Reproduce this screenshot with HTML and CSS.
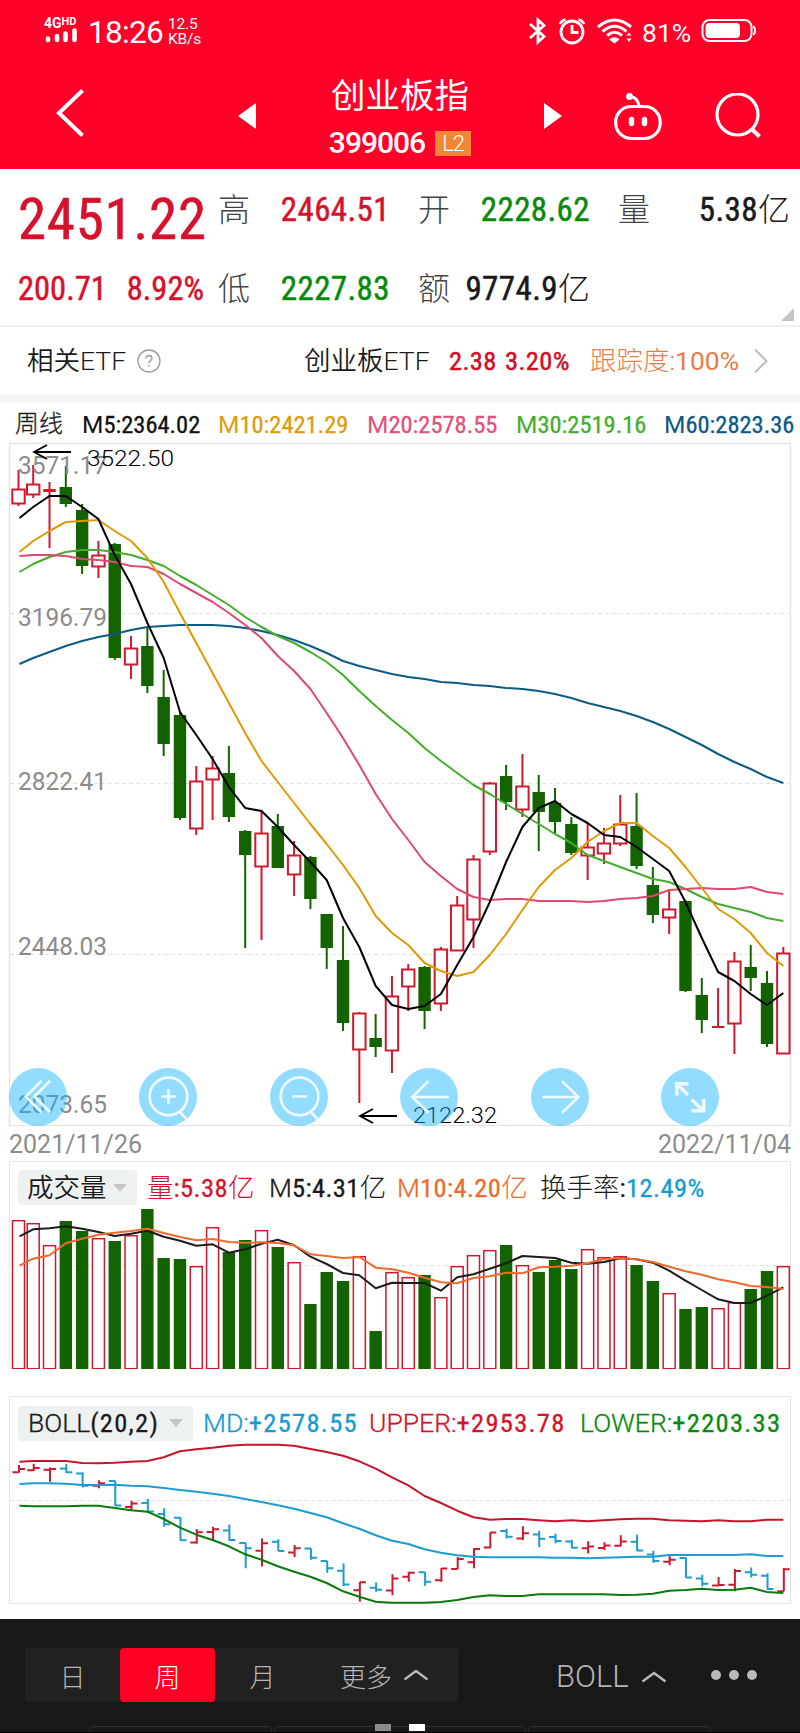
FILE: index.html
```html
<!DOCTYPE html>
<html lang="zh-CN">
<head>
    <meta charset="UTF-8">
    <meta name="viewport" content="width=device-width, initial-scale=1.0">
    <title>创业板指 399006</title>
    <link rel="stylesheet" href="styles.css">
</head>
<body>
    <header class="header">
        <div class="status">
            <div class="signal">
                <div class="net">4G<span class="hd">HD</span></div>
                <svg width="33" height="16" viewBox="0 0 33 16" stroke="#fff" stroke-width="4.6" stroke-linecap="round"><path d="M4 10.5V12M13 8V12M21.500 5.500V12M30.500 2.500V12"/></svg>
            </div>
            <div class="clock">18:26</div>
            <div class="speed">12.5<br>KB/s</div>
            <svg class="status-icons" width="106" height="32" viewBox="0 0 106 32" fill="none" stroke="#fff" stroke-width="2.800">
                <path d="M2 9L16 21.500L10 27V5L16 10.500L2 23"/>
                <circle cx="44" cy="17" r="11"/>
                <path d="M44 10V17.500H50.500M32 9Q33.500 5.500 37.500 4.500M56 9Q54.500 5.500 50.500 4.500"/>
                <path d="M70 12Q86.500 -2 103 12M74.500 16.500Q86.500 6 98.500 16.500M79 20.500Q86.500 14 94 20.500" stroke-width="3"/>
                <path d="M81 24.500Q86.500 20 91.500 24.500L86.500 28.500Z" fill="#fff" stroke="none"/>
                <path d="M98.500 20.500L101 17.500L103.500 20.500ZM98.500 23.500L101 27L103.500 23.500Z" fill="#fff" stroke="none"/>
            </svg>
            <div class="percent">81%</div>
            <svg width="56" height="26" viewBox="0 0 56 26" fill="none" stroke="#fff" stroke-width="2"><rect x="2.500" y="2" width="49" height="21" rx="7"/><rect x="5.500" y="5" width="34.500" height="15" rx="4" fill="#fff" stroke="none"/><path d="M53 8.500Q55 9 55 12.500Q55 16 53 16.500"/></svg>
        </div>
        <nav class="nav">
            <svg class="back" width="30" height="50" viewBox="0 0 30 50" fill="none" stroke="#fff" stroke-width="4"><path d="M26.500 2.500L3 25L26.500 47.500"/></svg>
            <svg class="prev" width="18" height="28" viewBox="0 0 18 28"><path d="M18 0V26L0 13Z" fill="#fff"/></svg>
            <div class="title">
                <h1>创业板指</h1>
                <p class="code">399006<span class="level">L2</span></p>
            </div>
            <svg class="next" width="18" height="28" viewBox="0 0 18 28"><path d="M0 0V26L18 13Z" fill="#fff"/></svg>
            <svg class="robot" width="48" height="48" viewBox="0 0 48 48" fill="none" stroke="#fff" stroke-width="3.200"><rect x="1.700" y="13.500" width="44.500" height="32" rx="15.500"/><path d="M16 3.500Q23.500 4 25 13"/><circle cx="15.500" cy="3.500" r="3.400" fill="#fff" stroke="none"/><path d="M17.500 26.500V30.500M30.500 26.500V30.500" stroke-width="5.400" stroke-linecap="round"/></svg>
            <svg class="search" width="46" height="46" viewBox="0 0 46 46" fill="none" stroke="#fff" stroke-width="3.200"><circle cx="22.500" cy="21.500" r="20.500"/><path d="M36 35.500L44.500 43.500" stroke-width="4"/></svg>
        </nav>
    </header>

    <section class="quote">
        <div class="price num red">2451.22</div>
        <div class="cell"><span class="name">高</span><span class="num red">2464.51</span></div>
        <div class="cell"><span class="name">开</span><span class="num green">2228.62</span></div>
        <div class="cell"><span class="name">量</span><span class="num">5.38<span class="cn">亿</span></span></div>
        <div class="change num red"><span>200.71</span><span>8.92%</span></div>
        <div class="cell"><span class="name">低</span><span class="num green">2227.83</span></div>
        <div class="cell"><span class="name">额</span><span class="num">9774.9<span class="cn">亿</span></span></div>
        <div class="corner"></div>
    </section>

    <section class="etf">
        <span class="etf-label">相关ETF</span>
        <svg class="help" width="24" height="24" viewBox="0 0 24 24" fill="none" stroke="#999" stroke-width="1.300"><circle cx="12" cy="12" r="11"/><path d="M9 9.500Q9 6.500 12 6.500Q15 6.500 15 9.300Q15 10.800 13.300 11.900Q12 12.800 12 14.500M12 16V17.800"/></svg>
        <span class="etf-name">创业板ETF</span>
        <span class="num etf-num">2.38</span>
        <span class="num etf-num etf-pct">3.20%</span>
        <span class="track">跟踪度:<span class="track-num">100%</span></span>
        <svg width="16" height="26" viewBox="0 0 16 26" fill="none" stroke="#bbb" stroke-width="2"><path d="M2 1.500L13.500 13L2 24.500"/></svg>
    </section>

    <section class="ma">
        <span class="period">周线</span>
        <span class="m5"><b>M</b>5:2364.02</span>
        <span class="m10"><b>M</b>10:2421.29</span>
        <span class="m20"><b>M</b>20:2578.55</span>
        <span class="m30"><b>M</b>30:2519.16</span>
        <span class="m60"><b>M</b>60:2823.36</span>
    </section>

    <section class="kline">
        <svg id="kline" width="800" height="684" viewBox="0 442 800 684"></svg>
        <div class="tools">
            <button><svg viewBox="0 0 57 57"><path d="M32 12.500L16.500 28L32 43.500M40.500 12.500L25 28L40.500 43.500"/></svg></button>
            <button><svg viewBox="0 0 57 57"><circle cx="29" cy="28" r="18.500"/><path d="M22 28H36.500M29 21V35.500M40 43L46.500 50"/></svg></button>
            <button><svg viewBox="0 0 57 57"><circle cx="29" cy="28" r="18.500"/><path d="M22 28H36.500M40 43L46.500 50"/></svg></button>
            <button><svg viewBox="0 0 57 57"><path d="M48 28.500H12M28 13L12 28.500L28 44"/></svg></button>
            <button><svg viewBox="0 0 57 57"><path d="M11 28.500H46M30.500 13L46.500 28.500L30.500 44"/></svg></button>
            <button><svg viewBox="0 0 57 57" class="bold"><path d="M26.500 26.500L15.500 15.500M15.500 27V15.500H27M30 31L41.500 42M42 30.500V42H30"/></svg></button>
        </div>
    </section>
    <div class="dates"><span>2021/11/26</span><span>2022/11/04</span></div>

    <section class="panel volume">
        <div class="legend">
            <span class="picker">成交量<i></i></span>
            <span class="red"><span class="cn">量</span>:5.38<span class="cn">亿</span></span>
            <span><b>M</b>5:4.31<span class="cn">亿</span></span>
            <span class="orange"><b>M</b>10:4.20<span class="cn">亿</span></span>
            <span><span class="cn">换手率</span>:<span class="blue">12.49%</span></span>
        </div>
        <svg id="volume" width="800" height="160" viewBox="0 1209 800 160"></svg>
    </section>

    <section class="panel boll">
        <div class="legend">
            <span class="picker"><span><b>BOLL</b>(20,2)</span><i></i></span>
            <span class="blue"><b>MD:</b>+2578.55</span>
            <span class="red"><b>UPPER:</b>+2953.78</span>
            <span class="green"><b>LOWER:</b>+2203.33</span>
        </div>
        <svg id="boll" width="800" height="163" viewBox="0 1441 800 163"></svg>
    </section>

    <footer class="footer">
        <div class="bar">
            <div class="tabs">
                <span>日</span>
                <span class="active">周</span>
                <span>月</span>
                <span class="more">更多<svg width="26" height="12" viewBox="0 0 26 12"><path d="M1.500 10.500L13 2L24.500 10.500"/></svg></span>
            </div>
            <div class="indicator">BOLL<svg width="26" height="12" viewBox="0 0 26 12"><path d="M1.500 10.500L13 2L24.500 10.500"/></svg></div>
            <div class="dots"><i></i><i></i><i></i></div>
        </div>
        <div class="cards">
            <i></i><i class="wide"></i><i></i>
            <div class="pager"><b></b><b class="on"></b></div>
        </div>
    </footer>

    <script src="chart.js"></script>
</body>
</html>
```
FILE: styles.css
```css
* {
    box-sizing: border-box;
}
body {
    margin: 0;
    width: 800px;
    background-color: #fff;
    color: #1a1a1a;
    font-family: Roboto, "Noto Sans CJK SC", sans-serif;
}
svg {
    display: block;
    flex-shrink: 0;
}
b {
    font-weight: 400;
}
.red { color: #d7112b; }
.green { color: #078a0c; }
.orange { color: #ee6a2c; }
.blue { color: #149bd3; }
.cn {
    font-family: "Noto Sans CJK SC", sans-serif;
    font-weight: 300;
    line-height: 1;
    letter-spacing: 0;
    -webkit-text-stroke: 0;
}
.num {
    font-weight: 400;
    font-stretch: 75%;
    letter-spacing: 0.400px;
    -webkit-text-stroke: 0.500px currentColor;
}

/* header */
.header {
    height: 169px;
    background-color: #ff0029;
    color: #fff;
}
.status {
    display: flex;
    height: 62px;
    padding: 15px 0 0 44px;
}
.signal {
    width: 44px;
}
.net {
    height: 13px;
    font-size: 14px;
    font-weight: 700;
    line-height: 14px;
}
.hd {
    font-size: 11px;
    vertical-align: 3px;
}
.clock {
    width: 80px;
    font-size: 31.500px;
    line-height: 36px;
    letter-spacing: -0.700px;
}
.speed {
    width: 90px;
    font-size: 15.500px;
    line-height: 15px;
    padding-top: 2px;
    letter-spacing: -0.200px;
}
.status-icons {
    margin-left: 270px;
}
.percent {
    width: 66px;
    padding-left: 8px;
    font-size: 26.500px;
    line-height: 35px;
}
.percent + svg {
    margin: 3px 0 0 0;
}
.nav {
    display: flex;
    height: 107px;
    padding-left: 56px;
}
.back { margin-top: 26px; }
.prev { margin: 41px 0 0 152px; }
.title {
    width: 288px;
    padding-top: 10px;
    text-align: center;
}
.title h1 {
    margin: 0;
    font-size: 34.500px;
    font-weight: 400;
    line-height: 48px;
}
.code {
    display: flex;
    justify-content: center;
    align-items: center;
    margin: 7px 0 0 0;
    font-size: 30px;
    font-weight: 500;
    line-height: 32px;
    letter-spacing: -1px;
}
.level {
    width: 36px;
    height: 25px;
    margin-left: 10px;
    background-color: #f08838;
    font-size: 22px;
    font-weight: 300;
    line-height: 26px;
}
.next { margin-top: 41px; }
.robot { margin: 31px 0 0 52px; }
.search { margin: 31px 0 0 53px; }

/* quote */
.quote {
    position: relative;
    display: grid;
    grid-template-columns: repeat(4, 172px);
    grid-template-rows: 79px 77px;
    column-gap: 28px;
    height: 158px;
    padding-left: 18px;
    border-bottom: 2px solid #efefef;
    white-space: nowrap;
}
.cell {
    display: flex;
    justify-content: space-between;
    font-size: 33px;
    line-height: 82px;
}
.cell .cn, .name {
    font-size: 32px;
}
.name {
    font-family: "Noto Sans CJK SC", sans-serif;
    font-weight: 300;
    line-height: 77px;
    color: #444;
}
.price {
    font-size: 57px;
    line-height: 101px;
    letter-spacing: 0.700px;
}
.change {
    display: flex;
    justify-content: space-between;
    width: 186px;
    font-size: 32.500px;
    line-height: 82px;
    letter-spacing: 0;
}
.corner {
    position: absolute;
    right: 6px;
    bottom: 4px;
    border-left: 13px solid transparent;
    border-bottom: 13px solid #c4c4c4;
}

/* etf */
.etf {
    display: flex;
    align-items: center;
    height: 76px;
    padding: 0 0 9px 27px;
    background: linear-gradient(#fff 67px, #f6f6f6 67px);
    font-size: 26.500px;
    font-weight: 300;
    line-height: 67px;
    white-space: nowrap;
}
.etf-label { width: 110px; font-weight: 350; }
.etf-name { width: 145px; margin-left: 143px; font-weight: 350; }
.etf-num { width: 56px; color: #cf1027; }
.etf-pct { width: 85px; }
.track { width: 163px; color: #e87c48; }
.track-num { font-weight: 400; }

/* moving average line */
.ma {
    display: grid;
    grid-template-columns: 67px 136px 149px 149px 148px 135px;
    height: 39px;
    padding-left: 15px;
    font-size: 24.500px;
    font-weight: 400;
    font-stretch: 75%;
    line-height: 44px;
    white-space: nowrap;
    -webkit-text-stroke: 0.300px currentColor;
}
.ma b {
    font-stretch: 100%;
    -webkit-text-stroke: 0;
}
.period {
    font-weight: 300;
    font-size: 24px;
    line-height: 42px;
}
.m5 { color: #111; }
.m10 { color: #dc9c0c; }
.m20 { color: #e2507a; }
.m30 { color: #43ae2c; }
.m60 { color: #0c5a86; }

/* k line */
.kline {
    position: relative;
    height: 684px;
}
.tools {
    position: absolute;
    left: 9px;
    bottom: 0;
    display: flex;
    gap: 72.400px;
}
.tools button {
    width: 58px;
    height: 58px;
    padding: 0;
    border: none;
    border-radius: 50%;
    background-color: rgba(13, 177, 255, 0.45);
}
.tools svg {
    fill: none;
    stroke: #eefaff;
    stroke-width: 2.600;
}
.tools svg.bold {
    stroke-width: 3.400;
}
.dates {
    display: flex;
    justify-content: space-between;
    height: 35px;
    padding: 0 9px;
    color: #8c8c8c;
    font-size: 25px;
    line-height: 37px;
}

/* lower panels */
.legend {
    display: grid;
    align-items: center;
    height: 35px;
    padding-left: 18px;
    font-size: 26.500px;
    font-weight: 400;
    font-stretch: 75%;
    line-height: 33px;
    letter-spacing: 0.400px;
    white-space: nowrap;
    -webkit-text-stroke: 0.300px currentColor;
}
.legend b {
    font-weight: 300;
    font-stretch: 100%;
    letter-spacing: 0;
}
.volume {
    height: 235px;
    padding-top: 9px;
}
.volume .legend {
    grid-template-columns: 129px 122px 128px 143px 180px;
}
.volume svg {
    margin-top: 4px;
}
.boll .legend {
    grid-template-columns: 185px 166px 211px 210px;
    line-height: 36px;
    letter-spacing: 1.300px;
}
.picker {
    display: flex;
    align-items: center;
    justify-content: space-between;
    width: 119px;
    height: 35px;
    padding: 0 10px;
    border-radius: 4px;
    background-color: #eef1f1;
}
.volume .picker {
    padding-left: 9px;
    font-weight: 350;
    letter-spacing: 0;
    -webkit-text-stroke: 0;
}
.boll .picker {
    width: 175px;
}
.picker i {
    border: 7px solid transparent;
    border-top: 8px solid #c6c6c6;
    border-bottom: none;
}
/* frame: top line and the sides down to the chart */
.panel {
    background:
        linear-gradient(#e6e6e6, #e6e6e6) 9px 0 / 782px 1px no-repeat,
        linear-gradient(#e6e6e6, #e6e6e6) 9px 0 / 1px 48px no-repeat,
        linear-gradient(#e6e6e6, #e6e6e6) 790px 0 / 1px 48px no-repeat;
}
.boll {
    height: 223px;
    padding-top: 9px;
}
.boll svg {
    margin-top: 1px;
}

/* footer */
.footer {
    height: 114px;
    padding-top: 29px;
    background-color: #181818;
    color: #b4b4b4;
    font-family: "Noto Sans CJK SC", sans-serif;
    font-weight: 300;
    font-size: 26px;
    border-bottom: 1px solid #000;
    overflow: hidden;
}
.footer svg {
    fill: none;
    stroke: #b9b9b9;
    stroke-width: 2.400;
}
.bar {
    display: flex;
    align-items: center;
    height: 54px;
    padding-left: 25px;
}
.tabs {
    display: flex;
    width: 433px;
    height: 54px;
    border-radius: 3px;
    background-color: #212121;
    line-height: 55px;
    text-align: center;
}
.tabs span {
    width: 95px;
}
.tabs .active {
    border-radius: 4px;
    background-color: #ff0022;
    color: #fff;
}
.tabs .more {
    display: flex;
    align-items: center;
    gap: 11px;
    width: 148px;
    padding-left: 30px;
}
.indicator {
    display: flex;
    align-items: center;
    gap: 12px;
    height: 54px;
    margin-left: 98px;
    padding-top: 3px;
    font-family: Roboto, sans-serif;
    font-size: 31px;
    line-height: 57px;
}
.dots {
    display: flex;
    gap: 8px;
    margin-left: 44px;
}
.dots i {
    width: 10px;
    height: 10px;
    border-radius: 50%;
    background-color: #b9b9b9;
}
.cards {
    position: relative;
    display: flex;
    gap: 2px;
    height: 10px;
    margin-top: 24px;
    padding-left: 89px;
}
.cards i {
    width: 183px;
    height: 20px;
    border: 1px solid #303030;
    border-radius: 5px;
}
.cards .wide {
    width: 252px;
}
.pager {
    position: absolute;
    left: 375px;
    top: -2px;
    display: flex;
    gap: 18px;
}
.pager b {
    width: 16px;
    height: 7px;
    background-color: #8c8c8c;
}
.pager .on {
    background-color: #fff;
}
```
FILE: chart.js
```js
const RED = '#cf1a2e';
const GREEN = '#136400';

// [up, high, body top, body bottom, low]
const candles = [
    [1,470,489,504,506],[1,465,484,495,498],[1,482,489,492,548],[0,466,487,504,507],
    [0,504,510,566,574],[1,541,555,567,578],[0,543,544,658,660],[1,636,648,665,679],
    [0,628,646,686,693],[0,670,697,744,756],[0,712,715,818,820],[1,766,781,829,835],
    [1,756,768,780,820],[0,746,773,817,822],[0,830,831,855,948],[1,811,833,867,940],
    [0,814,826,868,868],[1,841,855,875,896],[0,856,857,899,909],[0,914,914,948,969],
    [0,926,960,1023,1031],[1,1012,1013,1050,1103],[0,1014,1038,1047,1057],[1,976,996,1051,1073],
    [1,964,969,987,1011],[0,966,967,1011,1029],[1,947,949,1004,1011],[1,896,905,951,951],
    [1,855,859,920,948],[1,782,783,852,855],[0,765,776,802,810],[1,754,786,810,817],
    [0,775,792,812,851],[0,788,803,822,833],[0,817,824,853,855],[1,823,847,856,880],
    [1,828,843,854,864],[1,795,824,844,846],[0,793,826,866,869],[0,867,885,915,923],
    [1,891,909,918,934],[0,900,901,991,992],[0,978,995,1020,1033],[1,988,1026,1028,1028],
    [1,952,961,1024,1054],[0,945,967,978,991],[0,971,983,1044,1047],[1,947,953,1054,1054]
];
const ma5 = [518,507,496,496,507,519,555,584,623,658,712,735,759,787,808,811,827,845,862,880,918,947,986,1005,1009,1006,994,965,937,902,862,827,808,801,814,823,835,837,847,859,871,902,938,972,981,994,1005,993];
const ma10 = [552,541,531,522,521,520,531,541,558,582,613,643,673,703,733,761,782,803,824,844,865,888,916,933,945,963,971,976,972,955,934,910,887,870,858,842,831,823,823,836,848,867,888,909,919,933,953,966];
const ma20 = [556,555,555,556,559,560,562,566,567,574,584,593,602,613,625,638,656,671,689,713,738,765,794,819,840,862,876,889,897,900,899,899,901,901,901,902,901,899,898,896,890,889,888,889,889,887,892,894];
const ma30 = [572,564,557,552,550,550,552,555,560,566,576,585,595,605,617,627,636,643,652,662,675,691,706,720,733,748,761,773,785,794,804,814,824,834,843,855,861,867,873,879,882,889,897,904,908,912,918,921];
const ma60 = [664,658,652,646,641,637,634,630,627,626,625,625,625,626,628,631,635,640,646,653,661,666,670,674,677,679,682,683,685,686,688,689,691,694,698,703,707,711,716,722,729,737,745,754,762,769,777,783];

const volumes = [1220,1223,1245,1221,1231,1238,1241,1235,1209,1258,1259,1266,1227,1252,1240,1230,1247,1262,1304,1272,1281,1256,1331,1272,1277,1275,1297,1266,1255,1250,1245,1265,1272,1260,1269,1249,1257,1256,1265,1281,1293,1309,1307,1308,1302,1289,1271,1266];
const vol5 = [259,238,235,229,236,246,258,251,242,260,272,287,283,308,298,281,269,286,320,342,369,376,415,398,399,399,422,382,373,356,340,318,321,324,338,341,336,325,328,338,362,392,420,448,459,459,437,412];
const vol10 = [347,326,316,280,266,254,248,243,236,249,261,271,267,276,278,277,279,286,313,318,324,321,353,358,368,383,397,400,384,379,368,370,352,350,347,340,327,325,328,336,350,364,374,388,397,408,411,417];

const upper = [245,243,243,243,249,250,248,245,243,232,214,208,203,197,194,194,194,197,207,216,227,244,266,292,316,348,369,392,412,419,417,417,421,424,421,424,421,418,416,416,421,422,424,421,424,424,419,419];
const middle = [312,310,310,311,315,315,314,317,319,324,330,335,341,348,357,366,376,386,399,412,430,446,466,482,492,508,518,526,530,532,532,532,532,533,533,535,533,532,530,530,525,525,525,525,525,523,528,528];
const lower = [377,379,379,379,377,377,384,391,395,417,443,464,480,499,523,539,559,575,590,609,634,650,665,668,668,668,666,660,651,646,648,648,643,643,643,643,643,645,644,641,632,630,626,630,629,623,636,639];

function posX(i) {
    return i === 0 ? 18.5 : 16.9 + i * 16.307;
}

function line(values, color, top = 0, scale = 1) {
    const points = values.map((v, i) => `${(posX(i) + (i ? 0 : 1)).toFixed(1)},${(top + v * scale).toFixed(1)}`).join(' ');
    return `<polyline points="${points}" fill="none" stroke="${color}" stroke-width="2" stroke-linejoin="round"/>`;
}

function path(d, color, width, extra = '') {
    return `<path d="${d}" fill="none" stroke="${color}" stroke-width="${width}" ${extra}/>`;
}

function grid(y) {
    return path(`M10 ${y}H790`, '#e2e2e2', 1, 'stroke-dasharray="4 3"');
}

function text(x, y, size, width, color, str, weight = 400) {
    return `<text x="${x}" y="${y}" font-size="${size}" font-weight="${weight}" fill="${color}" textLength="${width}" lengthAdjust="spacingAndGlyphs">${str}</text>`;
}

function drawKline() {
    let out = path('M9.5 443.5H790.5V1125.5H9.5Z', '#e4e4e4', 1.4);
    [613.5, 783.5, 954.5].forEach(y => out += grid(y));
    candles.forEach(([up, high, top, bottom, low], i) => {
        const x = posX(i);
        const color = up ? RED : GREEN;
        out += path(`M${x} ${high}V${top}M${x} ${bottom}V${low}`, color, 2);
        if (up && bottom - top > 4) {
            out += `<rect x="${x - 6.2}" y="${top + 0.5}" width="12.4" height="${bottom - top - 1}" fill="#fff" stroke="${color}" stroke-width="2"/>`;
        } else {
            out += `<rect x="${x - 6.2}" y="${top}" width="12.4" height="${bottom - top}" fill="${color}"/>`;
        }
    });
    out += line(ma60, '#0c5a86') + line(ma30, '#43ae2c') + line(ma20, '#e0486f') + line(ma10, '#e09a00') + line(ma5, '#000');
    out += text(18, 474, 26.5, 89, '#8c8c8c', '3571.17');
    out += text(18, 626, 26.5, 89, '#8c8c8c', '3196.79');
    out += text(18, 790, 26.5, 89, '#8c8c8c', '2822.41');
    out += text(18, 955, 26.5, 89, '#8c8c8c', '2448.03');
    out += text(18, 1112.5, 26.5, 89, '#8c8c8c', '2073.65');
    // highest and lowest price marks
    out += path('M71 452H34M47 445L34 452L47 459', '#000', 1.8);
    out += text(87, 466, 22.5, 87, '#000', '3522.50', 300);
    out += path('M397 1116H360M373 1109L360 1116L373 1123', '#000', 1.8);
    out += text(413, 1123, 22.5, 84, '#000', '2122.32', 300);
    document.getElementById('kline').innerHTML = out;
}

function drawVolume() {
    let out = grid(1265.5) + path('M9.5 1209V1369M790.5 1209V1369', '#e8e8e8', 1);
    volumes.forEach((top, i) => {
        const x = posX(i);
        if (candles[i][0]) {
            out += `<rect x="${x - 6}" y="${top + 0.7}" width="12" height="${1368 - top}" fill="#fff" stroke="${RED}" stroke-width="1.5"/>`;
        } else {
            out += `<rect x="${x - 6.2}" y="${top}" width="12.4" height="${1369 - top}" fill="${GREEN}"/>`;
        }
    });
    out += line(vol5, '#1c1c1c', 1150, 1 / 3) + line(vol10, '#f0692d', 1150, 1 / 3);
    document.getElementById('volume').innerHTML = out;
}

function drawBoll() {
    let out = path('M9.5 1441V1603.5H790.5V1441', '#e4e4e4', 1) + grid(1500.5);
    candles.forEach(([up, ...values], i) => {
        const x = posX(i);
        const [high, top, bottom, low] = values.map(v => 1469 + (v - 489) * 0.2162);
        const open = up ? bottom : top;
        const close = up ? top : bottom;
        out += path(`M${x + 0.5} ${high}V${low}M${x - 6} ${open}H${x + 0.5}M${x + 0.5} ${close}H${x + 6.5}`, up ? RED : '#1c9cd0', 2);
    });
    out += line(upper, '#c8142a', 1380, 1 / 3) + line(middle, '#1c9cd0', 1380, 1 / 3) + line(lower, '#0a7a0a', 1380, 1 / 3);
    document.getElementById('boll').innerHTML = out;
}

drawKline();
drawVolume();
drawBoll();
```
